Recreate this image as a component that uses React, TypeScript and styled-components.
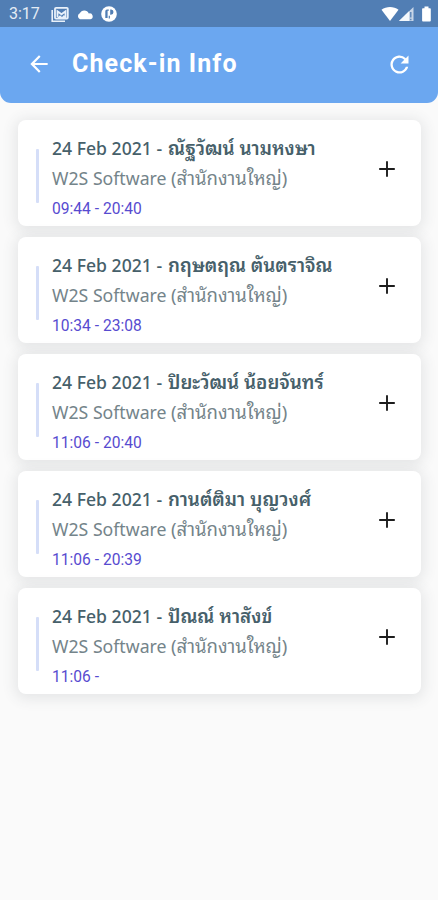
import React from "react";
import styled, { createGlobalStyle } from "styled-components";

const GlobalStyle = createGlobalStyle`
  * { box-sizing: border-box; }
  body { margin: 0; background: #fafafa; font-family: "Noto Sans", sans-serif; }
`;

const Screen = styled.div`
  width: 438px;
  height: 900px;
  overflow: hidden;
  background: #fafafa;
`;

const Header = styled.header`
  height: 103px;
  background: #6ba7f0;
  border-radius: 0 0 11px 11px;
  overflow: hidden;
  color: #fff;
  font-family: Roboto, sans-serif;
`;

const StatusBar = styled.div`
  height: 27px;
  padding: 1px 5px 0 9px;
  display: flex;
  align-items: center;
  background: #517eb4;
`;

const Clock = styled.span`
  width: 42px;
  font-size: 16px;
  line-height: 26px;
  color: #e4ecf5;
`;

const Notifications = styled.div`
  display: flex;
  align-items: center;
  gap: 7.5px;
`;

const SystemIcons = styled.div`
  display: flex;
  align-items: center;
  margin: 0 0 0 auto;
`;

const AppBar = styled.div`
  height: 74px;
  padding: 0 25px 0 26px;
  display: flex;
  align-items: center;
`;

const Title = styled.h1`
  flex: 1;
  margin: 0 0 0 20px;
  font-size: 25px;
  line-height: 30px;
  font-weight: 700;
  letter-spacing: 1.1px;
`;

const IconButton = styled.button`
  display: flex;
  padding: 0;
  border: 0;
  background: none;
  color: inherit;
`;

const List = styled.main`
  display: flex;
  flex-direction: column;
  gap: 11.1px;
  padding: 17px 17px 0 18px;
`;

const Card = styled.article`
  height: 106px;
  padding: 0 22px 0 17.5px;
  display: flex;
  align-items: center;
  border-radius: 8px;
  background: #fff;
  color: #1d1d1d;
  box-shadow: 0 2px 14px 3px rgba(60, 75, 80, 0.11);

  > button { margin-bottom: 8px; }
`;

const Accent = styled.div`
  width: 3.5px;
  height: 54px;
  margin: 5px 13px 0 0;
  border-radius: 1px;
  background: #d5def8;
`;

const Details = styled.div`
  flex: 1;
  height: 106px;
  padding-top: 13px;
  white-space: nowrap;
`;

const Row = styled.div`
  display: flex;
  height: 30px;
  line-height: 30px;
`;

const Heading = styled(Row)`
  color: #46606a;
  font-size: 17.6px;
  font-weight: 500;
`;

const Office = styled(Row)`
  color: #74848a;
  font-size: 17.7px;
`;

const Fit = styled.span<{ $width: number }>`
  width: ${(p) => p.$width}px;
  white-space: pre;
`;

const Thai = styled.span<{ $size: number; $weight?: number }>`
  font-family: "Noto Sans", "Noto Sans Thai Looped", "Noto Looped Thai", Loma, Waree, Garuda, sans-serif;
  font-size: ${(p) => p.$size}px;
  font-weight: ${(p) => p.$weight ?? 400};
`;

const Time = styled(Row)`
  height: 32px;
  line-height: 32px;
  color: #574bd0;
  font-family: Roboto, sans-serif;
  font-size: 15.6px;
`;

const entries = [
  { name: "ณัฐวัฒน์ นามหงษา", time: "09:44 - 20:40" },
  { name: "กฤษตฤณ ตันตราจิณ", time: "10:34 - 23:08" },
  { name: "ปิยะวัฒน์ น้อยจันทร์", time: "11:06 - 20:40" },
  { name: "กานต์ติมา บุญวงศ์", time: "11:06 - 20:39" },
  { name: "ปัณณ์ หาสังข์", time: "11:06 -" },
];

const GalleryIcon = () => (
  <svg width="18" height="17" viewBox="0 0 18 17" fill="none" stroke="#e9f1fa">
    <path d="M1.2 4v11.2H14" strokeWidth="1.6" />
    <rect x="4" y="1.8" width="12.8" height="10.8" rx="1" strokeWidth="1.8" />
    <path d="M6.5 11V5.300l4 3 4-3V11" strokeWidth="1.8" />
    <path d="M6 12l3-2.700 2 1.600 2-2 3 3.100z" fill="#e9f1fa" stroke="none" />
  </svg>
);

const CloudIcon = () => (
  <svg width="17" height="16" viewBox="0 0 17 16" fill="#fff">
    <path d="M3 13.200A3.200 3.200 0 0 1 2.800 7.300 4.900 4.900 0 0 1 11.800 7.400 3 3 0 0 1 13.500 13.200z" />
  </svg>
);

const BadgeIcon = () => (
  <svg width="16" height="16" viewBox="0 0 16 16">
    <circle cx="8" cy="8" r="7.800" fill="#fff" />
    <path d="M4.300 12V5.200q0-1.700 1.700-1.700h1.800v1.300H6.600V12zM9.200 3.500h1q2.300.3 2.300 2.600 0 2.500-2.600 2.700h-.7zM7.700 9.800h1.200v2.700H7.700z" fill="#517eb4" />
  </svg>
);

const WifiIcon = () => (
  <svg width="18" height="16" viewBox="0 0 18 16" fill="#fff">
    <path d="M.5 3.800C5.300.1 12.700.1 17.500 3.800L9 15z" />
  </svg>
);

const SignalIcon = () => (
  <svg width="15" height="16" viewBox="0 0 15 16">
    <path d="M0 15 14.500 1v14z" fill="#c7d5e7" />
    <path d="M0 15 10 5.300V15z" fill="#f4f8fc" />
    <path d="M11.800 6v5.500M11.800 12.800v1.400" stroke="#517eb4" strokeWidth="1.300" />
  </svg>
);

const BatteryIcon = () => (
  <svg width="19" height="16" viewBox="-1 0 19 16" fill="#fff">
    <path d="M9.500.500h4v1.700h1.500q.8 0 .8.800v11.500q0 1-.9 1H8q-.9 0-.9-1V3q0-.8.8-.8h1.600z" />
  </svg>
);

const BackIcon = () => (
  <svg width="26" height="26" viewBox="0 0 24 24" fill="currentColor">
    <path d="M20 11H7.830l5.590-5.590L12 4l-8 8 8 8 1.410-1.410L7.830 13H20z" />
  </svg>
);

const RefreshIcon = () => (
  <svg width="27" height="27" viewBox="0 0 24 24" fill="currentColor">
    <path d="M17.650 6.350A8 8 0 1 0 19.730 14h-2.080A6 6 0 1 1 12 6c1.660 0 3.140.69 4.220 1.780L13 11h7V4z" />
  </svg>
);

const PlusIcon = () => (
  <svg width="24" height="24" viewBox="0 0 24 24" stroke="currentColor" strokeWidth="1.900">
    <path d="M4.200 12h15.600M12 4.200v15.600" />
  </svg>
);

export default function App() {
  return (
    <Screen>
      <GlobalStyle />
      <Header>
        <StatusBar>
          <Clock>3:17</Clock>
          <Notifications>
            <GalleryIcon />
            <CloudIcon />
            <BadgeIcon />
          </Notifications>
          <SystemIcons>
            <WifiIcon />
            <SignalIcon />
            <BatteryIcon />
          </SystemIcons>
        </StatusBar>
        <AppBar>
          <IconButton aria-label="Back"><BackIcon /></IconButton>
          <Title>Check-in Info</Title>
          <IconButton aria-label="Refresh"><RefreshIcon /></IconButton>
        </AppBar>
      </Header>
      <List>
        {entries.map((entry) => (
          <Card key={entry.name}>
            <Accent />
            <Details>
              <Heading><Fit $width={116}>24 Feb 2021 - </Fit><Thai $size={18.8} $weight={600}>{entry.name}</Thai></Heading>
              <Office><Fit $width={119}>W2S Software </Fit><Thai $size={18.5}>(สำนักงานใหญ่)</Thai></Office>
              <Time>{entry.time}</Time>
            </Details>
            <IconButton aria-label="Expand"><PlusIcon /></IconButton>
          </Card>
        ))}
      </List>
    </Screen>
  );
}
